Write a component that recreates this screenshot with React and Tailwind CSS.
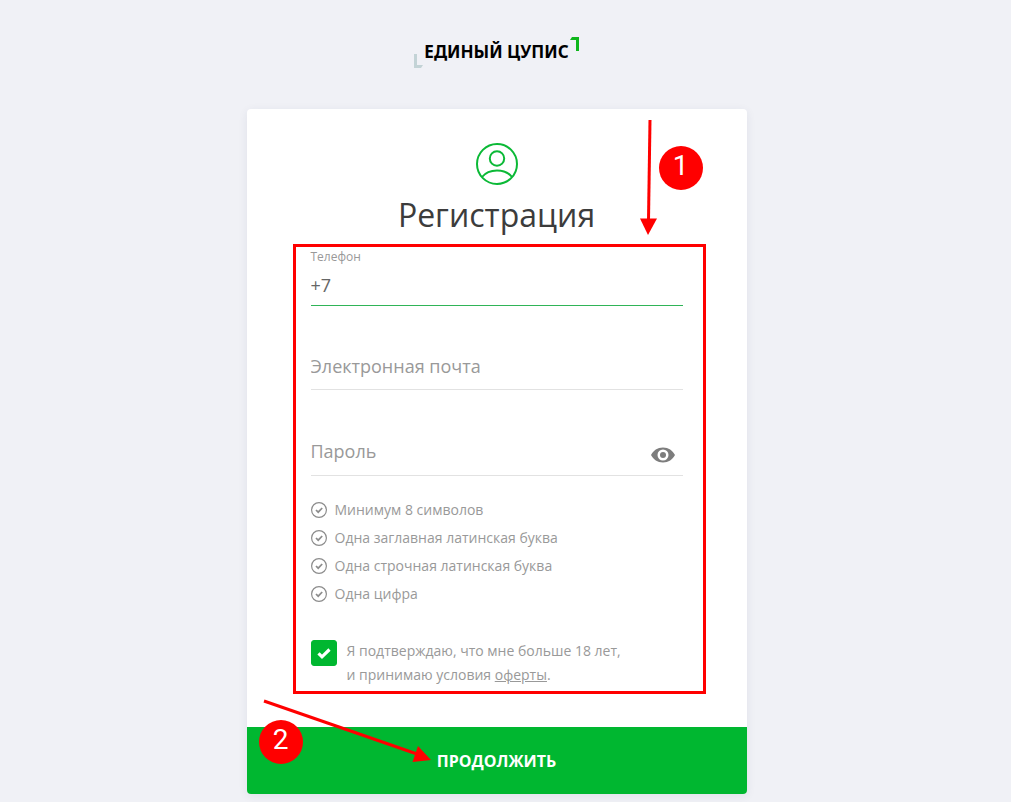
import { useState } from "react";

const passwordRules = [
  "Минимум 8 символов",
  "Одна заглавная латинская буква",
  "Одна строчная латинская буква",
  "Одна цифра",
];

function Logo() {
  return (
    <a href="#" className="relative px-2.5 font-['Noto_Sans','Open_Sans',sans-serif] text-[17px] leading-6 font-bold text-black">
      ЕДИНЫЙ ЦУПИС
      <svg className="absolute left-0 bottom-[-4px] h-3.5 w-2.5" viewBox="0 0 10 14" fill="#c3d3d6">
        <path d="M0 0h3v11h6l-2 3H0z" />
      </svg>
      <svg className="absolute right-0 top-[-3px] h-3.5 w-2.5" viewBox="0 0 10 14" fill="#0fb61c">
        <path d="M10 14H7V3H1l2-3h7z" />
      </svg>
    </a>
  );
}

function UserIcon() {
  return (
    <svg className="size-[42px]" viewBox="0 0 42 42" fill="none" stroke="#0bb936" strokeWidth="2">
      <circle cx="21" cy="21" r="20" />
      <circle cx="21" cy="15.500" r="7.200" />
      <path d="M6 34c3.500-4.500 9-6.600 15-6.600s11.500 2.100 15 6.600" />
    </svg>
  );
}

function EyeIcon() {
  return (
    <svg className="h-4 w-6" viewBox="0 0 24 16">
      <path
        fill="#7d7d7d"
        fillRule="evenodd"
        d="M12 0.500C6.500 0.500 2.300 3.500 0 8c2.300 4.500 6.500 7.500 12 7.500S21.700 12.500 24 8C21.700 3.500 17.500 0.500 12 0.500zM12 13.500a5.500 5.500 0 1 1 0-11 5.500 5.500 0 0 1 0 11z"
      />
      <circle cx="12" cy="8" r="3" fill="#7d7d7d" />
    </svg>
  );
}

function RuleIcon() {
  return (
    <svg className="size-4 shrink-0" viewBox="0 0 16 16" fill="none" stroke="#8c8c8c">
      <circle cx="8" cy="8" r="7.400" strokeWidth="1.200" />
      <path d="M5 8l2.200 2.200L11.200 6" strokeWidth="1.700" />
    </svg>
  );
}

// Red numbered circle of the instruction
function StepBadge({ children }) {
  return (
    <span className="flex size-11 justify-center rounded-full bg-[#ff0000] pt-1 font-[Roboto,sans-serif] text-[28px] leading-8 text-white">
      {children}
    </span>
  );
}

export default function App() {
  const [adult, setAdult] = useState(true);
  const [showPassword, setShowPassword] = useState(false);

  return (
    <div className="flex min-h-screen flex-col items-center bg-[#f0f1f6] pr-[18px] pb-2 font-['Open_Sans','Noto_Sans',sans-serif]">
      <header className="flex pt-10 pb-[45px]">
        <Logo />
      </header>

      <form
        onSubmit={(e) => e.preventDefault()}
        className="relative w-full max-w-[500px] rounded bg-white shadow-[0_2px_10px_rgba(40,50,90,0.08)]"
      >
        <div className="px-16 pt-[34px] pb-10">
          <div className="flex flex-col items-center">
            <UserIcon />
            <h1 className="mt-1.5 text-[32px] leading-[48px] text-[#3c3c3c]">Регистрация</h1>
          </div>

          {/* Form fields, outlined by the red frame */}
          <div className="relative mt-[9px]">
            <div className="pointer-events-none absolute -top-1 -right-[23px] -bottom-[7px] -left-[18px] border-3 border-[#ff0000]" />

            <label htmlFor="phone" className="block text-xs leading-[18px] text-[#999999]">
              Телефон
            </label>
            <input
              id="phone"
              type="tel"
              defaultValue="+7"
              className="block h-10 w-full border-b border-[#2fb457] bg-transparent pb-0.5 text-lg text-[#666666] outline-none"
            />

            <input
              type="email"
              aria-label="Электронная почта"
              placeholder="Электронная почта"
              className="mt-9 block h-12 w-full border-b border-[#e2e2e2] bg-transparent text-lg outline-none placeholder:text-[#999999]"
            />

            <div className="mt-[38px] flex h-12 items-center border-b border-[#e2e2e2] pr-2">
              <input
                type={showPassword ? "text" : "password"}
                aria-label="Пароль"
                placeholder="Пароль"
                className="h-full min-w-0 flex-1 bg-transparent pb-0.5 text-lg outline-none placeholder:text-[#999999]"
              />
              <button
                type="button"
                aria-label="Показать пароль"
                onClick={() => setShowPassword(!showPassword)}
                className="pt-1.5"
              >
                <EyeIcon />
              </button>
            </div>

            <ul className="mt-5 text-sm leading-7 text-[#999999]">
              {passwordRules.map((rule) => (
                <li key={rule} className="flex items-center gap-2">
                  <RuleIcon />
                  {rule}
                </li>
              ))}
            </ul>

            <div className="mt-[31px] flex items-start gap-2.5">
              <span className="relative mt-px flex size-[26px] shrink-0">
                <input
                  id="adult"
                  type="checkbox"
                  checked={adult}
                  onChange={(e) => setAdult(e.target.checked)}
                  className="size-full appearance-none rounded-[3px] border border-[#00b730] checked:bg-[#00b730]"
                />
                {adult && (
                  <svg className="pointer-events-none absolute inset-0" viewBox="0 0 26 26" fill="none" stroke="white" strokeWidth="3.200">
                    <path d="M7.500 13.300l3.500 3.500 7.500-7.300" />
                  </svg>
                )}
              </span>
              <label htmlFor="adult" className="text-sm leading-6 text-[#999999]">
                Я подтверждаю, что мне больше 18 лет,
                <br />и принимаю условия{" "}
                <a href="#" className="underline">
                  оферты
                </a>
                .
              </label>
            </div>
          </div>
        </div>

        <button type="submit" className="block h-[67px] w-full rounded-b bg-[#00b730] text-base font-bold text-white">
          ПРОДОЛЖИТЬ
        </button>

        {/* Instruction marks over the card */}
        <svg className="pointer-events-none absolute top-[11px] left-[392px] h-[116px] w-5" viewBox="0 0 20 116">
          <path d="M11 0L9.500 100" stroke="#ff0000" strokeWidth="3" />
          <path d="M1 98.500h17L9 115z" fill="#ff0000" />
        </svg>
        <div className="absolute top-[37px] left-[412px]">
          <StepBadge>1</StepBadge>
        </div>
        <svg className="pointer-events-none absolute top-[590px] left-4 h-[68px] w-[170px]" viewBox="0 0 170 68">
          <path d="M1 2L154 55" stroke="#ff0000" strokeWidth="3" />
          <path d="M155 47L168 61L149.500 63z" fill="#ff0000" />
        </svg>
        <div className="absolute top-[611px] left-3">
          <StepBadge>2</StepBadge>
        </div>
      </form>
    </div>
  );
}
